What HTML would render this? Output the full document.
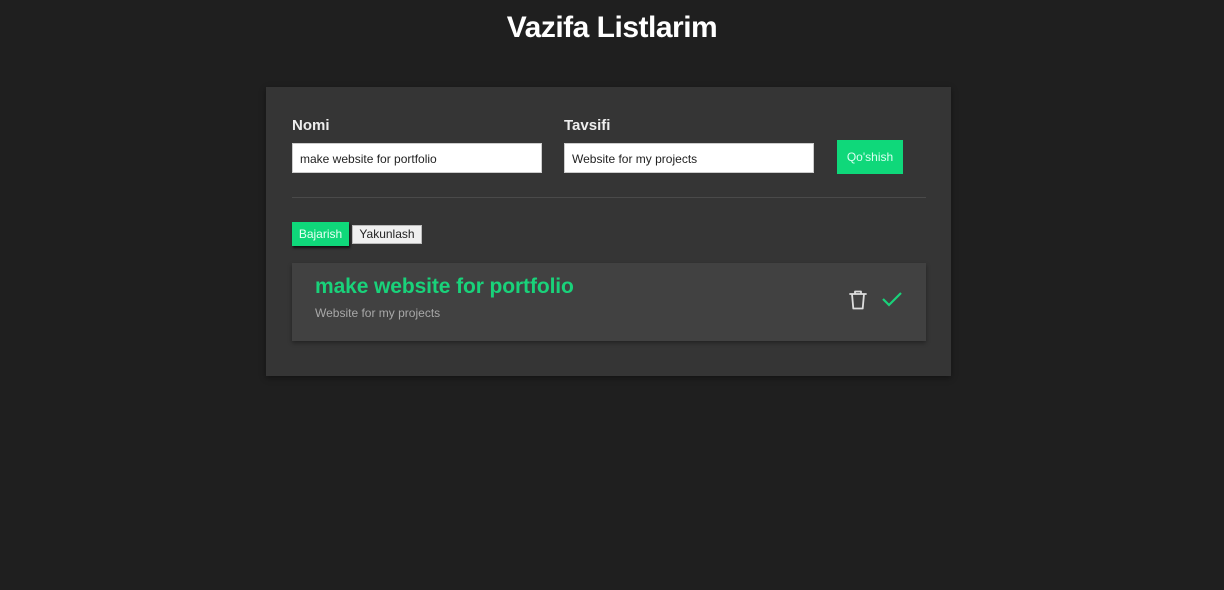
<!DOCTYPE html>
<html><head><meta charset="utf-8"><style>
*{box-sizing:border-box;margin:0;padding:0}
body{width:1224px;height:590px;background:#1f1f1f;font-family:"Liberation Sans",sans-serif;position:relative;overflow:hidden}
h1{position:absolute;top:11px;left:0;width:1224px;text-align:center;color:#fff;font-size:30px;font-weight:bold;letter-spacing:-0.5px}
.panel{position:absolute;left:266px;top:87px;width:685px;height:289px;background:#353535;box-shadow:0 2px 6px rgba(0,0,0,.4)}
.lbl{position:absolute;top:117px;color:#eee;font-size:15px;font-weight:bold}
.inp{position:absolute;top:143px;width:250px;height:30px;background:#fff;border:1px solid #ccc;font-size:12px;color:#222;padding:8px 7px}
.btn{position:absolute;left:837px;top:140px;width:66px;height:34px;background:#0fd87a;color:#d8fff0;font-size:12px;text-align:center;line-height:34px}
.hr{position:absolute;left:292px;top:197px;width:634px;height:1px;background:#4a4a4a}
.t1{position:absolute;left:292px;top:222px;width:57px;height:24px;background:#0fd87a;color:#e6fff3;font-size:12px;line-height:24px;text-align:center;box-shadow:1px 2px 2px #111}
.t2{position:absolute;left:352px;top:225px;width:70px;height:19px;background:#f0f0f0;border:1px solid #bbb;color:#222;font-size:12px;line-height:17px;text-align:center}
.card{position:absolute;left:292px;top:263px;width:634px;height:78px;background:#414141;box-shadow:0 2px 4px rgba(0,0,0,.35)}
.ct{position:absolute;left:23px;top:12px;color:#19d27a;font-size:21px;font-weight:bold;letter-spacing:-0.1px}
.cd{position:absolute;left:23px;top:43px;color:#a8a8a8;font-size:12px}
</style></head><body>
<h1>Vazifa Listlarim</h1>
<div class="panel"></div>
<div class="lbl" style="left:292px">Nomi</div>
<div class="lbl" style="left:564px">Tavsifi</div>
<div class="inp" style="left:292px">make website for portfolio</div>
<div class="inp" style="left:564px">Website for my projects</div>
<div class="btn">Qo'shish</div>
<div class="hr"></div>
<div class="t1">Bajarish</div>
<div class="t2">Yakunlash</div>
<div class="card">
<div class="ct">make website for portfolio</div>
<div class="cd">Website for my projects</div>
<svg style="position:absolute;left:556px;top:26px" width="20" height="22" viewBox="0 0 20 22" fill="none" stroke="#ddd" stroke-width="1.8" stroke-linejoin="round" stroke-linecap="round"><path d="M2 5h16M7 5V2.5h6V5M4 5l1.3 14.5h9.4L16 5"/></svg>
<svg style="position:absolute;left:590px;top:28px" width="20" height="16" viewBox="0 0 20 16" fill="none" stroke="#19d27a" stroke-width="2.2"><path d="M1 8l6 6L19 2"/></svg>
</div>
</body></html>
